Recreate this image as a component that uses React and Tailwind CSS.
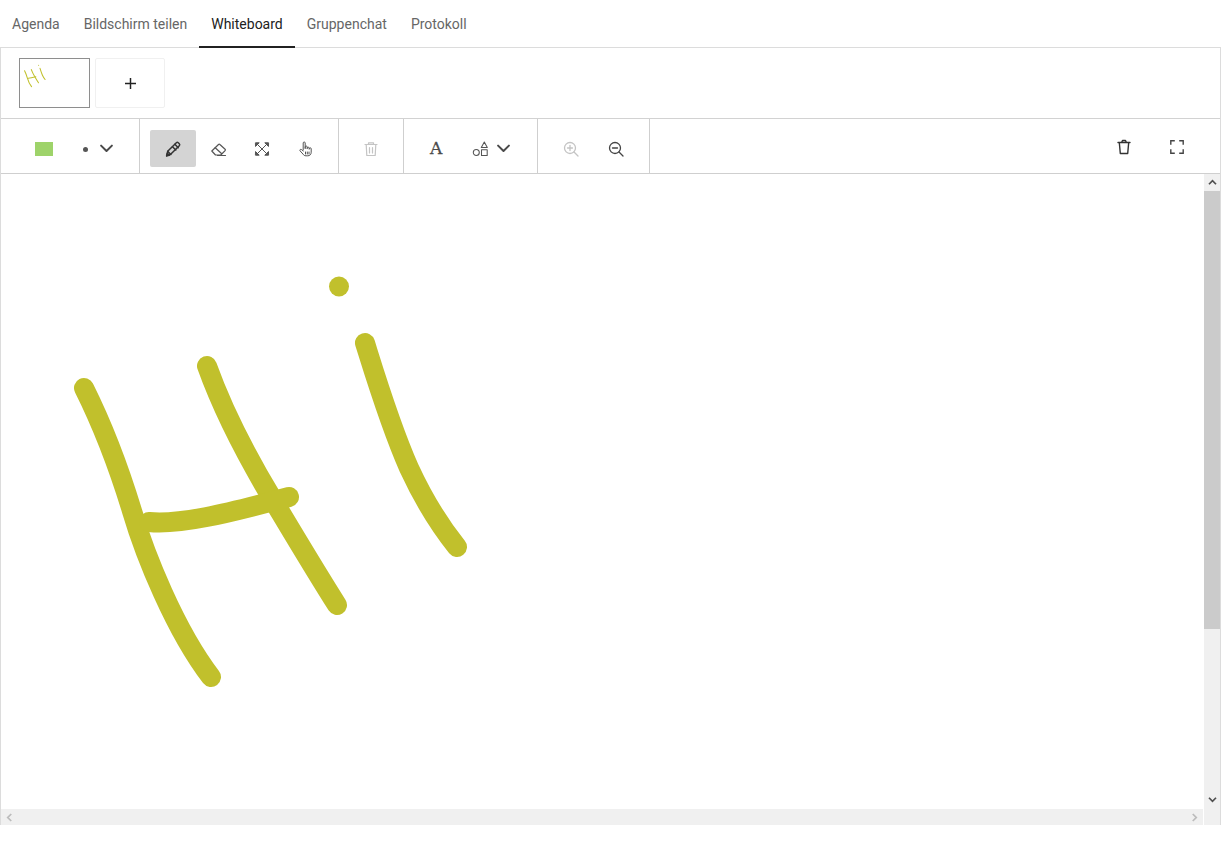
import React from "react";

const STROKE = "#c1c02c";
const strokes = [
  "M84 388 C100 420 118 465 132 511 C145 555 175 630 211 677",
  "M207 366 C222 408 246 455 273 500 C294 535 316 572 337 605",
  "M149 522 C180 525 225 514 289 497",
  "M365 343 C375 375 390 425 409 468 C421 494 437 522 457 547",
];

function Drawing({ viewBox, className, width = 20 }) {
  return (
    <svg viewBox={viewBox} className={className} fill="none" stroke={STROKE} strokeWidth={width} strokeLinecap="round" strokeLinejoin="round">
      {strokes.map((d, i) => (
        <path key={i} d={d} />
      ))}
      <circle cx="339" cy="286.5" r="10" fill={STROKE} stroke="none" />
    </svg>
  );
}

function Ico({ children, className = "text-[#555]", size = 18, sw = 1.2 }) {
  return (
    <svg viewBox="0 0 18 18" width={size} height={size} fill="none" stroke="currentColor" strokeWidth={sw} strokeLinecap="round" strokeLinejoin="round" className={className}>
      {children}
    </svg>
  );
}

const Chevron = () => (
  <Ico size={15} sw={2.4} className="text-[#4a4a4a]"><path d="M2.500 5.500 9 12l6.500-6.500" /></Ico>
);

const Pencil = () => (
  <Ico className="text-[#333]" sw={1.4} size={19}>
    <path d="M2.500 16l1-4.300 8.200-8.200a1.300 1.300 0 0 1 1.800 0l1 1a1.300 1.300 0 0 1 0 1.800l-8.200 8.200L2.500 16z" />
    <path d="M10.300 5l3.200 3.200M8 7.300l3.200 3.200M3.500 11.700l3 3" />
    <path d="M2.500 16l.6-2.600 2 2z" fill="currentColor" />
  </Ico>
);
const Eraser = () => (
  <Ico>
    <path d="M2.800 11 9.500 4.500a1 1 0 0 1 1.400 0l5.200 4.700a1 1 0 0 1 0 1.400l-4.300 4.400H6.500L2.800 11z" />
    <path d="M6.200 7.700l6.300 5.800M8.500 15.500h8" />
  </Ico>
);
const Expand = () => (
  <Ico sw={1} className="text-[#555]">
    <path d="M3.500 3.500l11 11M14.500 3.500l-11 11" />
    <path d="M2.800 2.800h3.400l-3.400 3.400zM15.200 2.800h-3.400l3.400 3.400zM2.800 15.200h3.400l-3.400-3.400zM15.200 15.200h-3.400l3.400-3.400z" fill="currentColor" />
  </Ico>
);
const Hand = () => (
  <Ico sw={1} className="text-[#555]">
    <path d="M6.200 10V3a1 1 0 0 1 2 0v5.500M8.200 8V7a1 1 0 0 1 2 0v1.500M10.200 8.200a1 1 0 0 1 2 0V9M12.200 8.800a1 1 0 0 1 2 0v3.400c0 2.200-1.300 3.600-3.400 3.600H9c-1.500 0-2.300-.6-3-1.700L3 10.800c-.6-1 .7-2 1.600-1.200L6.200 11" />
    <path d="M8.500 12v2M10.300 12v2M12 12v2" />
  </Ico>
);
const TrashFat = ({ className, sw = 1.2 }) => (
  <Ico className={className} sw={sw}>
    <path d="M3 4.500h12M6.500 4.500V2.800h5v1.700M4.200 4.500l.6 11h8.400l.6-11" />
    <path d="M7.500 7.500v5.500M10.500 7.500v5.500" />
  </Ico>
);
const Trash = () => (
  <Ico className="text-[#333]" sw={1.4}>
    <path d="M3 4.500h12M6.700 4.200l.8-1.700h3l.8 1.700M4.300 4.500l1 11h7.400l1-11" />
  </Ico>
);
const Fullscreen = () => (
  <Ico className="text-[#444]" sw={1.4} size={18}>
    <path d="M2.800 6.800V2.800h4M11.200 2.800h4v4M15.200 11.200v4h-4M6.800 15.200h-4v-4" strokeLinecap="butt" strokeLinejoin="miter" />
  </Ico>
);
const Shapes = () => (
  <Ico sw={1.05} size={18}>
    <path d="M13.300 2l3 5.500h-6z" />
    <rect x="10.500" y="9.700" width="5.700" height="5.700" />
    <circle cx="5.300" cy="12.400" r="3" />
  </Ico>
);
const Zoom = ({ minus, className }) => (
  <Ico className={className} sw={1.3}>
    <circle cx="8" cy="8" r="5.500" />
    <path d="M12 12l4 4M5.500 8h5" />
    {!minus && <path d="M8 5.500v5" />}
  </Ico>
);

const Btn = ({ children, active, className = "w-11" }) => (
  <div className={`flex h-[37px] items-center justify-center rounded-[2px] ${active ? "bg-[#d4d4d4]" : ""} ${className}`}>
    {children}
  </div>
);

const tabs = ["Agenda", "Bildschirm teilen", "Whiteboard", "Gruppenchat", "Protokoll"];

const Sep = "border-r border-[#cfcfcf]";

export default function App() {
  return (
    <div className="h-[844px] w-[1226px] overflow-hidden bg-white font-['Roboto',sans-serif] text-sm">
      <div className="flex h-[48px] w-[1221px] items-stretch border-b border-[#dcdcdc]">
        {tabs.map((t) => (
          <div
            key={t}
            className={`-mb-px flex items-center border-b-2 px-3 pt-[1px] ${t === "Whiteboard" ? "border-[#212121] text-[#212121]" : "border-transparent text-[#666666]"}`}
          >
            {t}
          </div>
        ))}
      </div>

      <div className="flex h-[777px] w-[1221px] flex-col border-x border-[#dcdcdc]">
        <div className="flex h-[71px] shrink-0 items-center gap-[5px] border-b border-[#d2d2d2] pb-px pl-[18px]">
          <div className="h-[50px] w-[71px] border border-[#8e8e8e] bg-white">
            <Drawing viewBox="1 174 1254 872" className="h-[48px] w-[69px]" width={19} />
          </div>
          <div className="flex h-[50px] w-[70px] items-center justify-center rounded-[2px] border border-[#f0f0f0] pt-[2px]">
            <svg viewBox="0 0 12 12" width="11" height="11" stroke="#222" strokeWidth="1.6"><path d="M6 0v12M0 6h12" /></svg>
          </div>
        </div>

        <div className="flex h-[55px] shrink-0 items-center border-b border-[#cfcfcf]">
          <div className={`flex h-full w-[139px] items-center pl-[34px] pt-[5px] ${Sep}`}>
            <div className="h-[14px] w-[18px] bg-[#9ed36a]" />
            <div className="ml-[30px] mt-px h-[5px] w-[5px] rounded-full bg-[#555]" />
            <div className="ml-[11px] flex"><Chevron /></div>
          </div>
          <div className={`flex h-full w-[199px] items-center pl-[10px] pt-[5px] ${Sep}`}>
            <Btn active className="w-[46px]"><Pencil /></Btn>
            <Btn><Eraser /></Btn>
            <Btn><Expand /></Btn>
            <Btn className="w-[43px]"><Hand /></Btn>
          </div>
          <div className={`flex h-full w-[65px] items-center justify-center pt-[5px] ${Sep}`}>
            <TrashFat className="text-[#c4c4c4]" />
          </div>
          <div className={`flex h-full w-[134px] items-center pl-[26px] pt-[5px] ${Sep}`}>
            <span className="w-[12px] text-center font-['DejaVu_Serif',serif] text-[17px] leading-none text-[#4a4a4a] [-webkit-text-stroke:0.3px_#4a4a4a]">A</span>
            <div className="ml-[29px] flex"><Shapes /></div>
            <div className="ml-[7px] flex"><Chevron /></div>
          </div>
          <div className={`flex h-full w-[112px] items-center pl-[24px] pt-[5px] ${Sep}`}>
            <Zoom className="text-[#c4c4c4]" />
            <div className="ml-[27px] flex"><Zoom minus className="text-[#444]" /></div>
          </div>
          <div className="flex h-full flex-1 items-center justify-end gap-[35px] pr-[34px] pt-[2px]">
            <Trash />
            <Fullscreen />
          </div>
        </div>

        <div className="flex min-h-0 flex-1">
          <div className="flex w-[1203px] flex-col">
            <div className="flex-1 bg-white">
              <Drawing viewBox="1 174 1203 635" className="h-[635px] w-[1203px]" />
            </div>
            <div className="mr-px flex h-4 items-center justify-between bg-[#f0f0f0] px-[5px]">
              <svg viewBox="0 0 8 10" width="7" height="9" fill="none" stroke="#bcbcbc" strokeWidth="2"><path d="M6 1 2 5l4 4" /></svg>
              <svg viewBox="0 0 8 10" width="7" height="9" fill="none" stroke="#bcbcbc" strokeWidth="2"><path d="M2 1l4 4-4 4" /></svg>
            </div>
          </div>
          <div className="flex w-4 flex-col bg-[#f0f0f0]">
            <div className="flex h-[17px] items-center justify-center">
              <svg viewBox="0 0 10 8" width="9" height="7" fill="none" stroke="#505050" strokeWidth="2"><path d="M1 6l4-4 4 4" /></svg>
            </div>
            <div className="h-[438px] bg-[#cbcbcb]" />
            <div className="flex-1" />
            <div className="flex h-[33px] items-start justify-center pt-[4px]">
              <svg viewBox="0 0 10 8" width="9" height="7" fill="none" stroke="#505050" strokeWidth="2"><path d="M1 2l4 4 4-4" /></svg>
            </div>
          </div>
        </div>
      </div>
    </div>
  );
}
